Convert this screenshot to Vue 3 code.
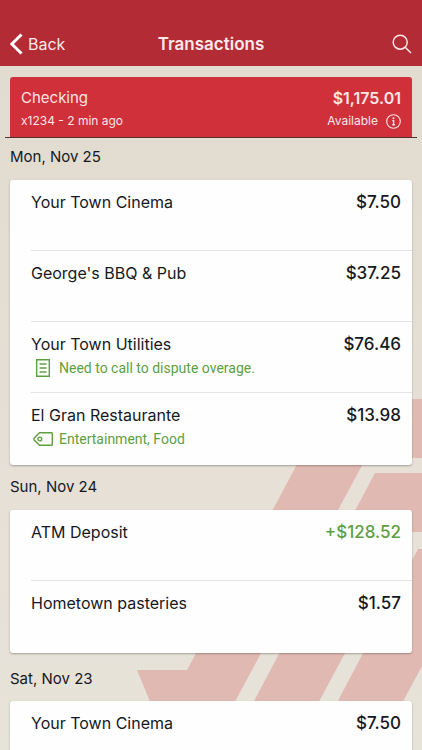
<script setup>
const account = {
  name: 'Checking',
  detail: 'x1234 - 2 min ago',
  balance: '$1,175.01',
}

const days = [
  {
    label: 'Mon, Nov 25',
    items: [
      { name: 'Your Town Cinema', amount: '$7.50' },
      { name: "George's BBQ & Pub", amount: '$37.25' },
      { name: 'Your Town Utilities', amount: '$76.46', icon: 'note', extra: 'Need to call to dispute overage.' },
      { name: 'El Gran Restaurante', amount: '$13.98', icon: 'tag', extra: 'Entertainment, Food' },
    ],
  },
  {
    label: 'Sun, Nov 24',
    items: [
      { name: 'ATM Deposit', amount: '+$128.52', credit: true },
      { name: 'Hometown pasteries', amount: '$1.57' },
    ],
  },
  {
    label: 'Sat, Nov 23',
    items: [{ name: 'Your Town Cinema', amount: '$7.50' }],
  },
]
</script>

<template>
  <div class="screen">
    <svg class="backdrop" viewBox="0 0 422 750" preserveAspectRatio="xMaxYMin slice" aria-hidden="true">
      <path d="M332 399H422V458H366L209 750H170L137 670H187Z" />
      <path d="M375 473H422V532H410L293 750H228Z" />
      <path d="M418 549H422V666L377 750H312Z" />
    </svg>

    <header class="bar">
      <button class="back" type="button">
        <svg width="13" height="22" viewBox="0 0 13 22" aria-hidden="true">
          <path d="M11.5 1.5L1.8 11L11.5 20.5" />
        </svg>
        <span>Back</span>
      </button>
      <h1>Transactions</h1>
      <button class="search" type="button" aria-label="Search">
        <svg width="20" height="20" viewBox="0 0 20 20" aria-hidden="true">
          <circle cx="8.2" cy="8.2" r="7" />
          <path d="M13.2 13.2L19 19" />
        </svg>
      </button>
    </header>

    <main>
      <section class="account">
        <div class="summary">
          <div class="line">
            <span class="account-name">{{ account.name }}</span>
            <strong>{{ account.balance }}</strong>
          </div>
          <div class="line small">
            <span>{{ account.detail }}</span>
            <span class="available">
              Available
              <button class="info" type="button" aria-label="Balance details">
                <svg width="15" height="15" viewBox="0 0 15 15" aria-hidden="true">
                  <circle cx="7.5" cy="7.5" r="6.8" />
                  <path class="stem" d="M6.3 6.6H7.6V10.8M6.3 10.8H8.9" />
                  <circle class="dot" cx="7.5" cy="4.3" r="1" />
                </svg>
              </button>
            </span>
          </div>
        </div>
      </section>

      <section v-for="day in days" :key="day.label" class="day">
        <h2>{{ day.label }}</h2>
        <ul>
          <li v-for="item in day.items" :key="item.name">
            <div class="entry">
              <span>{{ item.name }}</span>
              <span class="amount" :class="{ credit: item.credit }">{{ item.amount }}</span>
            </div>
            <div v-if="item.extra" class="extra">
              <svg v-if="item.icon === 'note'" width="22" height="18" viewBox="0 0 22 18" aria-hidden="true">
                <path d="M4.7 0.7H17.3V17.3H4.7ZM7.5 5H14.5M7.5 9H14.5M7.5 13H14.5" />
              </svg>
              <svg v-else width="22" height="18" viewBox="0 0 22 18" aria-hidden="true">
                <path d="M7.5 2.7H19.5Q20.3 2.7 20.3 3.5V14.5Q20.3 15.3 19.5 15.3H7.5L2.2 10Q1.4 9 2.2 8Z" />
                <circle cx="7.8" cy="9" r="1.9" />
              </svg>
              <span>{{ item.extra }}</span>
            </div>
          </li>
        </ul>
      </section>
    </main>
  </div>
</template>

<style>
body {
  margin: 0;
  background: #e5dfd4;
}
</style>

<style scoped>
.screen {
  position: relative;
  height: 100vh;
  overflow: hidden;
  background: linear-gradient(#e2dbcf, #e3ddd2 40%, #e7e0d7 64%, #e6e3d9);
  color: #15191f;
  font-family: Inter, "Liberation Sans", sans-serif;
  font-size: 16px;
  line-height: 22px;
}

.backdrop {
  position: absolute;
  inset: 0;
  width: 100%;
  height: 100%;
  fill: #e1b9b3;
}

.bar {
  position: relative;
  display: grid;
  grid-template-columns: 1fr auto 1fr;
  align-items: center;
  padding: 22px 10px 0;
  height: 44px;
  background: #b32b35;
  color: #fbe9e9;
}

h1,
h2 {
  margin: 0;
}

h1 {
  font-size: 17px;
  font-weight: 600;
}

button {
  display: flex;
  align-items: center;
  padding: 0;
  border: 0;
  background: none;
  color: inherit;
  font: inherit;
}

.back {
  justify-self: start;
  gap: 5px;
}

.back svg {
  fill: none;
  stroke: #fff;
  stroke-width: 3;
}

.search {
  justify-self: end;
}

.search svg,
.info svg {
  fill: none;
  stroke: currentColor;
  stroke-width: 1.5;
}

main {
  position: relative;
}

.account {
  padding: 11px 5px 0;
}

.summary {
  margin: 0 5px;
  padding: 10px 11px 5px;
  border-radius: 3px 3px 0 0;
  background: #cf303a;
  color: #fbe5e5;
}

.account::after {
  content: "";
  display: block;
  height: 1px;
  background: #55302f;
}

.line {
  display: flex;
  justify-content: space-between;
}

.line strong {
  font-weight: 600;
}

.account-name {
  font-size: 15px;
}

.small {
  margin-top: 1px;
  font-size: 12px;
}

.available {
  display: flex;
  align-items: center;
  gap: 8px;
}

.info svg {
  stroke-width: 1.1;
}

.info .stem {
  stroke-width: 1.4;
}

.info .dot {
  fill: currentColor;
  stroke: none;
}

h2 {
  padding: 10px 10px 11px;
  font-size: 15px;
  font-weight: 400;
  line-height: 24px;
}

.account + .day h2 {
  padding-top: 7px;
}

.day:last-child h2 {
  padding-top: 14px;
  padding-bottom: 10px;
}

ul {
  list-style: none;
  margin: 0 10px;
  padding: 0 0 0 21px;
  border-radius: 3px;
  background: #fefefe;
  box-shadow: 0 1px 2px rgb(70 60 50 / 40%);
}

li {
  box-sizing: border-box;
  min-height: 71px;
  padding: 11px 11px 0 0;
  border-bottom: 1px solid #e3e4e5;
}

li:last-child {
  min-height: 72px;
  border-bottom: 0;
}

.entry {
  display: flex;
  align-items: baseline;
  justify-content: space-between;
}

.amount {
  font-size: 17px;
  font-weight: 500;
}

.credit {
  color: #5f9f43;
}

.extra {
  display: flex;
  align-items: center;
  gap: 5px;
  margin: 2px 0 0 1px;
  color: #5f9f43;
  font-family: Roboto, sans-serif;
  font-size: 14px;
}

.extra svg {
  fill: none;
  stroke: currentColor;
  stroke-width: 1.4;
}
</style>
